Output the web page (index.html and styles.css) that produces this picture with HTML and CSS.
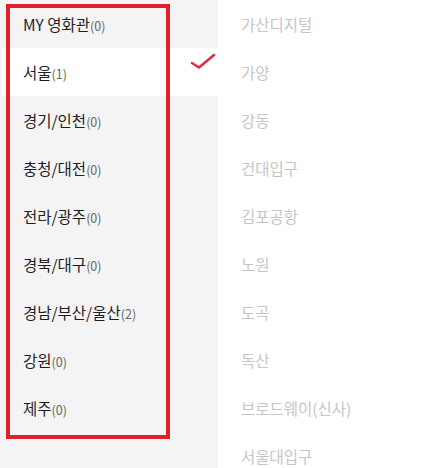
FILE: index.html
```html
<!DOCTYPE html>
<html>
<head>
    <title>극장 선택</title>
    <link rel="stylesheet" href="styles.css">
</head>
<body>
    <div class="picker">
        <ul class="area-list">
            <li class="area">MY 영화관<span class="count">(0)</span></li>
            <li class="area selected">서울<span class="count">(1)</span>
                <svg class="check" width="28" height="20" viewBox="0 0 28 20"><path d="M3 11 L10 15.5 L25 3" fill="none" stroke="#d9304a" stroke-width="2.6" stroke-linecap="round" stroke-linejoin="round"/></svg>
            </li>
            <li class="area">경기/인천<span class="count">(0)</span></li>
            <li class="area">충청/대전<span class="count">(0)</span></li>
            <li class="area">전라/광주<span class="count">(0)</span></li>
            <li class="area">경북/대구<span class="count">(0)</span></li>
            <li class="area">경남/부산/울산<span class="count">(2)</span></li>
            <li class="area">강원<span class="count">(0)</span></li>
            <li class="area">제주<span class="count">(0)</span></li>
        </ul>
        <div class="highlight-box"></div>
        <ul class="theater-list">
            <li>가산디지털</li>
            <li>가양</li>
            <li>강동</li>
            <li>건대입구</li>
            <li>김포공항</li>
            <li>노원</li>
            <li>도곡</li>
            <li>독산</li>
            <li>브로드웨이(신사)</li>
            <li>서울대입구</li>
        </ul>
    </div>
</body>
</html>
```

FILE: styles.css
```css
body { margin: 0; background: #fff; font-family: "Noto Sans CJK KR", "Noto Sans", sans-serif; }
ul { list-style: none; margin: 0; padding: 0; }
.picker { position: relative; display: flex; height: 468px; overflow: hidden; }
.area-list { width: 218px; background: #f4f4f4; }
.area { position: relative; height: 48px; line-height: 48px; padding-left: 23px; font-size: 15.5px; color: #1e1e1e; }
.area.selected { background: #fff; margin-left: 2px; padding-left: 21px; }
.count { font-size: 12.5px; color: #666; }
.check { position: absolute; left: 187px; top: 4px; }
.highlight-box { position: absolute; left: 6px; top: 4px; width: 156px; height: 427px; border: 4px solid #e0212b; pointer-events: none; }
.theater-list { padding-left: 23px; }
.theater-list li { height: 48px; line-height: 48px; font-size: 15.5px; color: #c6c6c6; }
```
